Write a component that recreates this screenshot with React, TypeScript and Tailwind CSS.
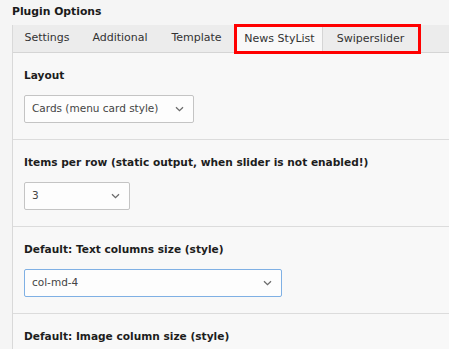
const Chevron = () => (
  <svg width="9" height="6" viewBox="0 0 9 6" className="shrink-0">
    <path d="M1 1.2 L4.5 4.6 L8 1.2" fill="none" stroke="#6b6b6b" strokeWidth="1.3" />
  </svg>
);

const Select = ({ value, width, focused }: { value: string; width: string; focused?: boolean }) => (
  <div
    className={`${width} h-[28px] flex items-center justify-between pl-[7px] pr-[9px] rounded-[2px] border bg-[#fdfdfd] text-[10.5px] text-[#444] ${
      focused ? "border-[#7fb0e4]" : "border-[#c4c4c4]"
    }`}
  >
    <span>{value}</span>
    <Chevron />
  </div>
);

const Field = ({ label, children }: { label: string; children?: React.ReactNode }) => (
  <section className="border-b border-[#dcdcdc] pl-[11px] pt-[15px] pb-[16px] flex flex-col gap-[13px]">
    <h3 className="font-bold text-[10.6px] text-[#1d1d1d] leading-[14px]">{label}</h3>
    {children}
  </section>
);

const tabs = [
  { name: "Settings", w: "w-[68px]" },
  { name: "Additional", w: "w-[78px]" },
  { name: "Template", w: "w-[75px]" },
];

export default function App() {
  return (
    <div
      className="w-[449px] h-[349px] overflow-hidden bg-[#f5f5f5] text-[11px] text-[#333]"
      style={{ fontFamily: '"DejaVu Sans", Verdana, sans-serif' }}
    >
      <h2 className="pl-[12px] pt-[5px] h-[25px] font-bold text-[10.8px] text-[#1a1a1a] leading-[14px]">Plugin Options</h2>
      <div className="ml-[12px] w-[460px] border-l border-[#d9d9d9] bg-[#f8f8f8]">
        <nav className="h-[28px] flex bg-[#ececec] border-b border-[#d5d5d5]">
          {tabs.map((t) => (
            <div key={t.name} className={`${t.w} flex items-center justify-center`}>
              {t.name}
            </div>
          ))}
          <div className="flex h-[30px] -mt-[1px] border-[3px] border-[#f00]">
            <div className="w-[86px] flex items-center justify-center bg-[#f8f8f8] border-r border-[#d5d5d5]">
              News StyList
            </div>
            <div className="w-[95px] flex items-center justify-center">Swiperslider</div>
          </div>
        </nav>
        <Field label="Layout">
          <Select value="Cards (menu card style)" width="w-[170px]" />
        </Field>
        <Field label="Items per row (static output, when slider is not enabled!)">
          <Select value="3" width="w-[106px]" />
        </Field>
        <Field label="Default: Text columns size (style)">
          <Select value="col-md-4" width="w-[258px]" focused />
        </Field>
        <Field label="Default: Image column size (style)" />
      </div>
    </div>
  );
}
